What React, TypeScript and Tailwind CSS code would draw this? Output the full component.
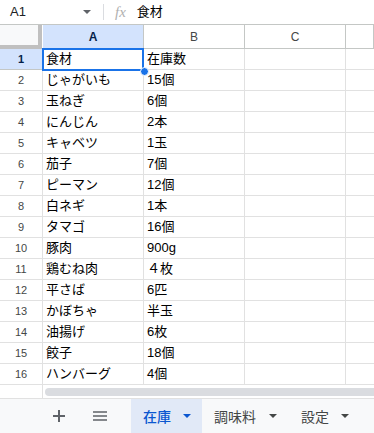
import React from "react";

const rows: [string, string][] = [
  ["食材", "在庫数"],
  ["じゃがいも", "15個"],
  ["玉ねぎ", "6個"],
  ["にんじん", "2本"],
  ["キャベツ", "1玉"],
  ["茄子", "7個"],
  ["ピーマン", "12個"],
  ["白ネギ", "1本"],
  ["タマゴ", "16個"],
  ["豚肉", "900g"],
  ["鶏むね肉", "４枚"],
  ["平さば", "6匹"],
  ["かぼちゃ", "半玉"],
  ["油揚げ", "6枚"],
  ["餃子", "18個"],
  ["ハンバーグ", "4個"],
];

const Caret = ({ className }: { className?: string }) => (
  <svg width="8" height="4" viewBox="0 0 8 4" className={className}>
    <path d="M0 0h8L4 4z" fill="currentColor" />
  </svg>
);

export default function App() {
  const font = { fontFamily: '"Liberation Sans", Arial, "Noto Sans CJK JP", sans-serif' };

  return (
    <div className="w-[374px] h-[433px] overflow-hidden bg-white flex flex-col text-black" style={font}>
      {/* formula bar */}
      <div className="h-[25px] flex items-center border-b border-[#c4c7c5] shrink-0">
        <div className="w-[83px] pl-[10px] text-[13px] text-[#202124]">A1</div>
        <Caret className="text-[#5f6368]" />
        <div className="w-px h-[16px] bg-[#dadce0] ml-[12px] mr-[11px]" />
        <span className="text-[15px] italic text-[#b0b0b0] mr-[11px]" style={{ fontFamily: '"Liberation Serif", serif' }}>
          fx
        </span>
        <span className="text-[13px]">食材</span>
      </div>

      {/* grid */}
      <div className="relative shrink-0">
        <div className="grid grid-cols-[43px_101px_101px_101px_1fr]">
          {/* header row */}
          <div className="h-[24px] bg-[#f8f9fa] border-r-4 border-b-4 border-[#c0c0c0] mr-[1px]" />
          <div className="h-[24px] bg-[#d3e3fd] border-r border-b border-[#c4c7c5] flex items-center justify-center text-[12px] font-bold text-[#041e49]">
            A
          </div>
          {["B", "C", ""].map((c, i) => (
            <div
              key={i}
              className="h-[24px] border-r border-b border-[#c4c7c5] flex items-center justify-center text-[12px] text-[#444746]"
            >
              {c}
            </div>
          ))}

          {rows.map(([a, b], i) => (
            <React.Fragment key={i}>
              <div
                className={
                  "h-[21px] border-r border-b flex items-center justify-center text-[11px] " +
                  (i === 0
                    ? "bg-[#d3e3fd] font-bold text-[#041e49] border-[#c4c7c5]"
                    : "text-[#444746] border-[#e1e1e1]")
                }
              >
                {i + 1}
              </div>
              <div className="h-[21px] border-r border-b border-[#e1e1e1] flex items-center pl-[3px] text-[13px] whitespace-nowrap overflow-hidden">
                {a}
              </div>
              <div className="h-[21px] border-r border-b border-[#e1e1e1] flex items-center pl-[3px] text-[13px] whitespace-nowrap overflow-hidden">
                {b}
              </div>
              <div className="h-[21px] border-r border-b border-[#e1e1e1]" />
              <div className="h-[21px] border-b border-[#e1e1e1]" />
            </React.Fragment>
          ))}
        </div>

        {/* selection around A1 */}
        <div className="absolute left-[42px] top-[23px] w-[102px] h-[23px] border-2 border-[#1a73e8] pointer-events-none" />
        <div className="absolute left-[140px] top-[42px] w-[7px] h-[7px] rounded-full bg-[#1a73e8] border border-white box-content" />
      </div>

      {/* horizontal scroll area */}
      <div className="h-[14px] flex border-b border-[#e1e1e1] shrink-0">
        <div className="w-[43px] border-r border-[#e1e1e1]" />
        <div className="flex-1 flex items-center pl-[2px]">
          <div className="h-[8px] w-full rounded-l-full bg-[#dadce0]" />
        </div>
      </div>

      {/* sheet tabs */}
      <div className="flex-1 bg-[#f8f9fa] flex items-stretch" style={{ fontFamily: '"Noto Sans CJK JP", "Liberation Sans", sans-serif' }}>
        <div className="w-[131px] flex items-center">
          <svg width="12" height="12" viewBox="0 0 12 12" className="ml-[53px] text-[#5f6368]">
            <path d="M6 0v12M0 6h12" stroke="currentColor" strokeWidth="2" />
          </svg>
          <svg width="14" height="10" viewBox="0 0 14 10" className="ml-[28px] text-[#5f6368]">
            <path d="M0 1h14M0 5h14M0 9h14" stroke="currentColor" strokeWidth="1.6" />
          </svg>
        </div>
        <div className="w-[71px] bg-[#e1e9f7] flex items-center pl-[12px] gap-[12px] text-[#0b57d0] text-[14px] font-medium">
          <span>在庫</span>
          <Caret />
        </div>
        <div className="flex items-center pl-[12px] gap-[13px] text-[#444746] text-[14px]">
          <span>調味料</span>
          <Caret />
        </div>
        <div className="flex items-center pl-[24px] gap-[12px] text-[#444746] text-[14px]">
          <span>設定</span>
          <Caret />
        </div>
      </div>
    </div>
  );
}
